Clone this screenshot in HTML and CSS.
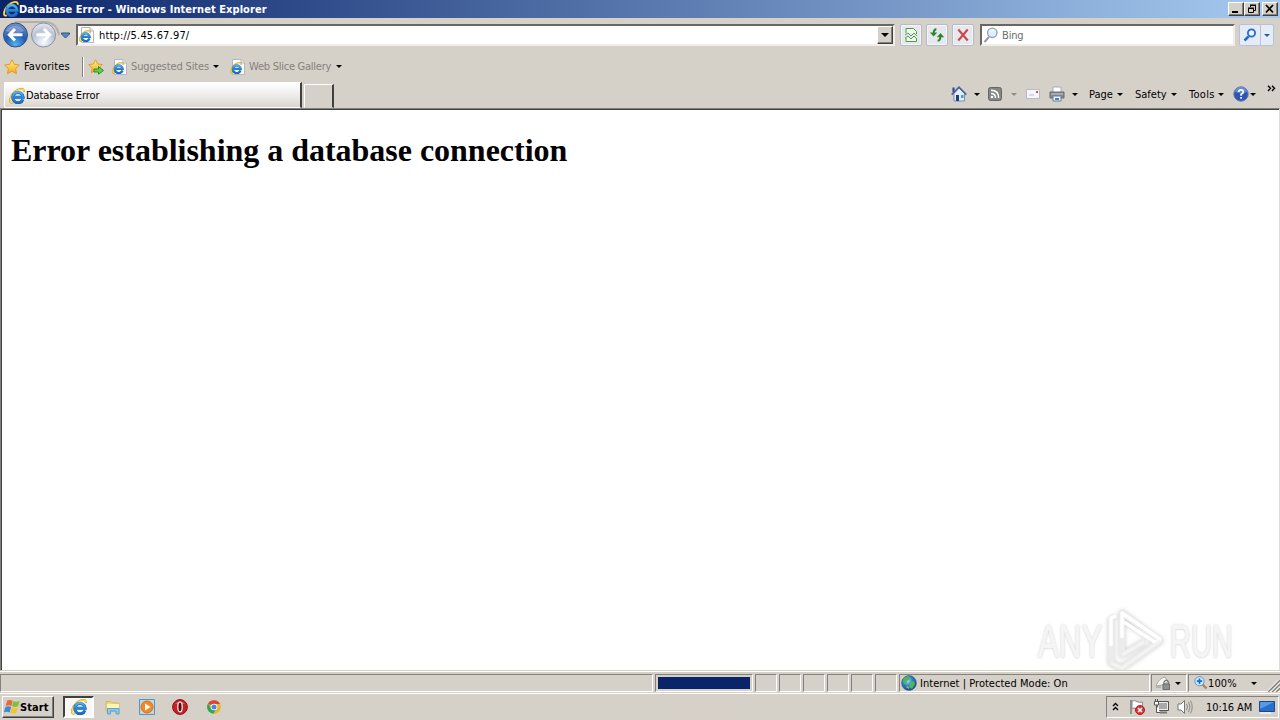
FILE: index.html
```html
<!DOCTYPE html>
<html lang="en">
<head>
<meta charset="utf-8">
<title>Database Error</title>
<link rel="stylesheet" href="styles.css">
</head>
<body>
<svg class="defs" aria-hidden="true">
  <defs>
    <linearGradient id="sky" gradientUnits="userSpaceOnUse" x1="0" y1="2" x2="0" y2="15"><stop offset="0" stop-color="#63c3f5"/><stop offset=".5" stop-color="#2f8fdd"/><stop offset="1" stop-color="#1a6cc6"/></linearGradient>
    <radialGradient id="blue" cx=".5" cy=".9" r=".9"><stop offset="0" stop-color="#52b4f2"/><stop offset=".5" stop-color="#235ab4"/><stop offset="1" stop-color="#7793ca"/></radialGradient>
    <radialGradient id="silver" cx=".5" cy=".8" r=".8"><stop offset="0" stop-color="#f7faff"/><stop offset=".6" stop-color="#b9c2d6"/><stop offset="1" stop-color="#e7eaf0"/></radialGradient>
    <linearGradient id="gold" x1="0" y1="0" x2="0" y2="1"><stop offset="0" stop-color="#fff38a"/><stop offset="1" stop-color="#f7a819"/></linearGradient>
    <radialGradient id="globe" cx=".4" cy=".35" r=".7"><stop offset="0" stop-color="#a8ddf4"/><stop offset=".5" stop-color="#2d7dc3"/><stop offset="1" stop-color="#17468c"/></radialGradient>
    <symbol id="ie" viewBox="0 0 16 16">
      <path d="M4 14.4C-.6 16.4-.2 9 5.4 4 10.5-.2 15.6-.2 14.8 4" fill="none" stroke="#dba21a" stroke-width="1.9"/>
      <path d="M3.5 14.4C-.2 15.4.4 9 5.6 4.1 10.4.4 14.8 0 14.6 3.2" fill="none" stroke="#ffe464" stroke-width="1.1"/>
      <path d="M13.9 11.4A5.2 5.2 0 1 1 14.2 9.3H5" fill="none" stroke="#1b5fb0" stroke-width="3"/>
      <path d="M13.7 11.4A5.2 5.2 0 1 1 14.1 9.3H5" fill="none" stroke="url(#sky)" stroke-width="2.2"/>
    </symbol>
    <symbol id="iepage" viewBox="0 0 16 16">
      <path d="M2.5.5H11L14.5 4V15.5H2.5Z" fill="#fdfdff" stroke="#aeb7c7"/><path d="M11 .5V4H14.5" fill="#dde5f0" stroke="#aeb7c7"/>
      <use href="#ie" x="0" y="3" width="12" height="12"/>
    </symbol>
    <symbol id="star" viewBox="0 0 16 16"><path d="M8 .8 10.2 5.3 15.3 6 11.6 9.6 12.5 14.7 8 12.2 3.5 14.7 4.4 9.6.7 6 5.8 5.3Z" fill="url(#gold)" stroke="#e09c2c"/></symbol>
    <symbol id="caret" viewBox="0 0 6 3"><path d="M0 0H6L3 3Z" fill="currentColor"/></symbol>
  </defs>
</svg>

<header class="titlebar">
  <svg class="i16"><use href="#ie"/></svg>
  <span class="title">Database Error - Windows Internet Explorer</span>
  <div class="winbtns">
    <span class="winbtn"><svg viewBox="0 0 14 12"><path d="M3 9H9" stroke="#000" stroke-width="2"/></svg></span>
    <span class="winbtn"><svg viewBox="0 0 14 12"><path d="M5.5 4V2.5H10.5V7.5H9M5 2H11M3.5 5.5H8.5V9.5H3.5ZM3 5H9" fill="none" stroke="#000"/></svg></span>
    <span class="winbtn close"><svg viewBox="0 0 14 12"><path d="M3 2 10 9.5M10 2 3 9.5" stroke="#000" stroke-width="1.7"/></svg></span>
  </div>
</header>

<nav class="nav">
  <svg class="travel" viewBox="0 0 72 28">
    <path d="M13 1H44Q55 2 57 14" fill="none" stroke="#b3b0ad" stroke-width="2"/>
    <circle cx="13.5" cy="14" r="12" fill="url(#blue)" stroke="#344c7c"/><path d="M4 10a10 9 0 0 1 18 0Q13 15 4 10Z" fill="#fff" opacity=".25"/>
    <path d="M13 8 7.3 13.8 13 19.5M8 13.8H20.5" fill="none" stroke="#fff" stroke-width="3"/>
    <circle cx="41.5" cy="14" r="12" fill="url(#silver)" stroke="#8a91a2"/>
    <path d="M42 8 47.7 13.8 42 19.5M47 13.8H34.5" fill="none" stroke="#fff" stroke-width="3"/>
    <path d="M59.5 12H67.5V13L63.5 17 59.5 13Z" fill="#4e8fc7" stroke="#284e80"/>
  </svg>
  <div class="address">
    <svg class="i16"><use href="#iepage"/></svg><span class="url">http://5.45.67.97/</span>
    <span class="drop"><svg class="caret wide"><use href="#caret"/></svg></span>
  </div>
  <div class="navbtns">
    <span class="navbtn"><svg class="i16" viewBox="0 0 16 16"><path d="M3 6V1.5H10.5L13.5 4.5V7M3 11V14.5H13.5V11" fill="#effaec" stroke="#4a9c48"/><path d="M2 8 5 6 8 9 11 6 14 9M2 11 5 9 8 12 11 9 14 12" fill="none" stroke="#4fa04d"/></svg></span>
    <span class="navbtn"><svg class="i16" viewBox="0 0 16 16"><path d="M7.4 2.3Q4.6 2.3 4.6 7" fill="none" stroke="#28812c" stroke-width="2"/><path d="M.9 5.4H8.3L4.6 9.6Z" fill="#288a2c"/><path d="M8.6 13.7Q11.5 13.7 11.5 9" fill="none" stroke="#28812c" stroke-width="2"/><path d="M7.8 10.2H15.2L11.5 6Z" fill="#288a2c"/></svg></span>
    <span class="navbtn"><svg class="i16" viewBox="0 0 16 16"><path d="M3.3 2.5 12.7 13.5M12.7 2.5 3.3 13.5" stroke="#c7494b" stroke-width="2.1"/></svg></span>
  </div>
  <div class="search">
    <svg class="i16" viewBox="0 0 16 16"><path d="M6 9.8 1.5 15" stroke="#9696a3" stroke-width="2"/><circle cx="9.3" cy="5.8" r="4.7" fill="#e2effa" stroke="#91a4be" stroke-width="1.4"/><path d="M7 5Q8 2.5 11 3.5" stroke="#fff" fill="none"/></svg>
    <span class="bing">Bing</span>
  </div>
  <div class="go">
    <span class="gomain"><svg class="go-icon" viewBox="0 0 14 14"><path d="M5.5 8.5 1.5 12.5" stroke="#2769cc" stroke-width="2.5"/><circle cx="8.5" cy="5" r="3.6" fill="#e8f3ff" stroke="#2769cc" stroke-width="1.8"/></svg></span>
    <span class="godrop"><svg class="caret"><use href="#caret"/></svg></span>
  </div>
</nav>

<div class="favbar">
  <svg class="i16"><use href="#star"/></svg><span class="favlabel">Favorites</span>
  <i class="divider"></i>
  <svg class="i16" viewBox="0 0 16 16"><use href="#star" width="15" height="15"/><path d="M6 10H10.5V7.5L15.5 11.5 10.5 15.2V13H6Z" fill="#67ce4b" stroke="#298d2c"/></svg>
  <svg class="i16 sug"><use href="#iepage"/></svg><span class="suggested">Suggested Sites</span><svg class="caret"><use href="#caret"/></svg>
  <svg class="i16 wsi"><use href="#iepage"/></svg><span class="slice">Web Slice Gallery</span><svg class="caret"><use href="#caret"/></svg>
</div>

<div class="tabbar">
  <div class="tab"><svg class="i16"><use href="#ie"/></svg><span class="tabname">Database Error</span></div>
  <div class="newtab"></div>
  <div class="commands">
    <svg class="i16" viewBox="0 0 16 16"><path d="M3 7.5V15H13.5V7.5L8 2Z" fill="#e6eef9" stroke="#758fb9"/><path d="M2.5 1.5V6" stroke="#353c88" stroke-width="2"/><path d="M.7 8.6 8 1.2 15.3 8.6" fill="none" stroke="#47639d" stroke-width="1.6"/><path d="M5 9H8V15H5Z" fill="#223d76"/><path d="M10 9H12.5V12H10Z" fill="#39a0de"/></svg>
    <svg class="caret c-home"><use href="#caret"/></svg>
    <svg class="rss" viewBox="0 0 14 14"><rect x=".5" y=".5" width="13" height="13" rx="2" fill="#858585" stroke="#676767"/><path d="M3 6.5Q7.5 6.5 7.5 11M3 3.3Q10.7 3.3 10.7 11" fill="none" stroke="#fff" stroke-width="1.5"/><circle cx="4" cy="10" r="1.3" fill="#fff"/></svg>
    <svg class="caret c-rss"><use href="#caret"/></svg>
    <svg class="mail" viewBox="0 0 14 10"><path d="M.5.5H13.5V9.5H.5Z" fill="#f7f7fb" stroke="#b9b8c4"/><path d="M10 2H12V4H10Z" fill="#d84957"/><path d="M3 6H8" stroke="#bbc"/></svg>
    <svg class="i16 printer" viewBox="0 0 16 16"><path d="M4 1H12V7H4Z" fill="#fff" stroke="#a5abb7"/><path d="M1 6H15V12H1Z" fill="#858a94" stroke="#666b73"/><path d="M2 8H14" stroke="#c7cbd2"/><path d="M4 10H12V15H4Z" fill="#eaf3fc" stroke="#6c7c94"/><path d="M6 13H10" stroke="#318ac9" stroke-width="2"/></svg>
    <svg class="caret c-print"><use href="#caret"/></svg>
    <span class="page">Page</span><svg class="caret"><use href="#caret"/></svg>
    <span class="safety">Safety</span><svg class="caret"><use href="#caret"/></svg>
    <span class="tools">Tools</span><svg class="caret"><use href="#caret"/></svg>
    <svg class="i16 help" viewBox="0 0 16 16"><circle cx="8" cy="8" r="7.2" fill="#2e55b0" stroke="#6178ac"/><path d="M2 6a6 5 0 0 1 12 0Q8 8 2 6" fill="#8aaef0" opacity=".6"/><path d="M5.7 6Q5.7 3.8 8 3.8T10.3 6Q10.3 7.2 8.1 8.3V9.7M8.1 11V12.8" fill="none" stroke="#fff" stroke-width="1.7"/></svg><svg class="caret c-help"><use href="#caret"/></svg>
    <svg class="more" viewBox="0 0 9 7"><path d="M1 .7 3.5 3.3 1 6M5 .7 7.5 3.3 5 6" fill="none" stroke="#000" stroke-width="1.4"/></svg>
  </div>
</div>

<main class="content">
  <h1>Error establishing a database connection</h1>
  <div class="watermark">
    <span class="any">ANY</span>
    <svg class="play" viewBox="0 0 60 66"><path d="M5 10V55L16 60 54 33 16 5V47L38 34" fill="none" stroke="#ebebeb" stroke-width="6" stroke-linejoin="round"/><path d="M5 38V10L10 8M16 30V5L54 31 50 35 18 14" fill="none" stroke="#fff" stroke-width="3.5" stroke-linejoin="round"/><path d="M5 55 16 60 54 33M16 47 38 34" fill="none" stroke="#f3f3f3" stroke-width="3"/></svg>
    <span class="run">RUN</span>
  </div>
</main>

<div class="status">
  <div class="pane message"></div>
  <div class="pane progress"><i></i></div>
  <div class="pane small"></div><div class="pane small"></div><div class="pane small"></div><div class="pane small"></div><div class="pane small"></div><div class="pane small"></div>
  <div class="pane zone"><svg class="i16" viewBox="0 0 16 16"><circle cx="8" cy="8" r="7.4" fill="url(#globe)" stroke="#315a79" stroke-width=".6"/><path d="M3 3 7 1 9 4 6 6 5 9 2 8ZM9 7 13 6 14 9 11 14 8 12Z" fill="#4fb659"/><path d="M5 12Q8 10 8 14" fill="#83d277"/></svg><span class="zonetext">Internet | Protected Mode: On</span></div>
  <div class="pane protect"><svg class="i16" viewBox="0 0 16 16"><path d="M1 11Q4 3 10 2L13 7 7 10Z" fill="#f4f4f4" stroke="#aaa"/><path d="M1 12H6" stroke="#999"/><path d="M9 9V7Q11.3 3.5 13.5 7V9" fill="none" stroke="#777" stroke-width="1.3"/><path d="M8 9H14.5V14.5H8Z" fill="#909090" stroke="#6c6c6c"/></svg><svg class="caret"><use href="#caret"/></svg></div>
  <div class="pane zoom"><svg class="zoomicon" viewBox="0 0 14 14"><path d="M8.5 8.5 12.5 12.5" stroke="#a9885f" stroke-width="2.4"/><circle cx="5.5" cy="5.2" r="4.6" fill="#d3eaff" stroke="#5d93ce"/><path d="M5.5 2.5V8M2.8 5.2H8.2" stroke="#176cce" stroke-width="1.8"/></svg><span class="percent">100%</span><svg class="caret c-zoom"><use href="#caret"/></svg>
    <svg class="grip" viewBox="0 0 12 12"><path d="M0 12 12 0M4 12 12 4M8 12 12 8" stroke="#85817b" stroke-width="1.6"/><path d="M-1.5 12 12-1.5M2.5 12 12 2.5M6.5 12 12 6.5" stroke="#fff"/></svg></div>
</div>

<footer class="taskbar">
  <div class="start"><svg class="flag" viewBox="0 0 16 16"><path d="M3.2 1.6Q5.8.2 8.6 1.7L7.4 7Q4.8 5.6 1.7 7Z" fill="#ed6732"/><path d="M9.4 2Q12.2 3.4 15.6 1.8L14.1 7.3Q11.2 8.8 8 7.3Z" fill="#85be38"/><path d="M1.4 8Q4.3 6.6 7.1 8L5.7 13.4Q3 12-.1 13.4Z" fill="#3b8ad7"/><path d="M7.8 8.3Q10.8 9.8 13.8 8.4L12.3 13.8Q9.5 15.2 6.4 13.8Z" fill="#f6c52c"/></svg><span class="startlabel">Start</span></div>
  <div class="ietask"><svg class="i16"><use href="#ie"/></svg></div>
  <svg class="i16 folder" viewBox="0 0 16 16"><path d="M1 2.5H6L7.5 4H14V12H1Z" fill="#f1d67f" stroke="#d6b766"/><path d="M2 5H14V9H2Z" fill="#fff4b4"/><path d="M2.5 15V9.5H14V15H11V12H5.5V15Z" fill="#8bc8ea" stroke="#5aa4cf"/></svg>
  <svg class="i16 media" viewBox="0 0 16 16"><path d="M.5.5H15.5V15.5H.5Z" fill="#b9d9ee" stroke="#5a93bd"/><circle cx="8" cy="8" r="6" fill="#f28a20" stroke="#d97112"/><path d="M6 4.5 11.5 8 6 11.5Z" fill="#fff"/></svg>
  <svg class="i16 opera" viewBox="0 0 16 16"><circle cx="8" cy="8" r="7.4" fill="#c52129" stroke="#8e1016"/><path d="M3 5a5.5 4 0 0 1 10 0" fill="#f49a9a" opacity=".5"/><ellipse cx="8" cy="8" rx="2.2" ry="5" fill="#5e090d" stroke="#fff" stroke-width="1.2"/></svg>
  <svg class="chrome" viewBox="0 0 14 14"><circle cx="7" cy="7" r="6.8" fill="#e4b829"/><path d="M7 7 1 3.4A7 7 0 0 1 13.1 4H7Z" fill="#db4437"/><path d="M1 3.4A7 7 0 0 0 6.3 13.8L9 9 4 8Z" fill="#2da65a"/><circle cx="7" cy="7" r="3.3" fill="#fff"/><circle cx="7" cy="7" r="2.5" fill="#4285f4"/></svg>
  <div class="tray">
    <svg class="chev" viewBox="0 0 7 9"><path d="M1 4 3.5 1.5 6 4M1 8 3.5 5.5 6 8" fill="none" stroke="#000" stroke-width="1.3"/></svg>
    <svg class="i16 actionflag" viewBox="0 0 16 16"><path d="M2 1V15" stroke="#777" stroke-width="1.4"/><path d="M3 2Q6 1 8 2.5T13.5 3V10Q9 11 7 9.5T3 10Z" fill="#fff" stroke="#898989"/><circle cx="11" cy="11" r="4.5" fill="#d93636" stroke="#a81e22"/><path d="M9 9 13 13M13 9 9 13" stroke="#fff" stroke-width="1.5"/></svg>
    <svg class="i16 network" viewBox="0 0 16 16"><path d="M4.5 2.5H15.5V11.5H4.5Z" fill="#aaa9a7" stroke="#555"/><path d="M5.5 3.5H14.5V10.5H5.5Z" fill="none" stroke="#eee"/><path d="M7 13.5H14" stroke="#777" stroke-width="2"/><path d="M1.5 2.5V6H5.5V2.5ZM3.5 6V13.5H7M2.5 0V3M4.5 0V3" fill="#fff" stroke="#555"/></svg>
    <svg class="i16 volume" viewBox="0 0 16 16"><path d="M1 5H4L7.5 1.5V14.5L4 11H1Z" fill="#fff" stroke="#777"/><path d="M9.5 5Q11.5 8 9.5 11M11.5 3Q14.5 8 11.5 13M13.4 1.5Q17 8 13.4 14.5" fill="none" stroke="#8b8b8b"/></svg>
    <span class="clock">10:16 AM</span>
    <svg class="desktop" viewBox="0 0 16 14"><path d="M.5 1.5H15.5V11.5H.5Z" fill="#276fcb" stroke="#1c4788"/><path d="M1 2H15L1 9Z" fill="#589be4"/><path d="M1 13H12" stroke="#eff5ff" stroke-width="1.5"/></svg>
  </div>
</footer>
</body>
</html>
```
FILE: styles.css
```css
* { box-sizing: border-box; }
body { margin: 0; width: 1280px; height: 720px; overflow: hidden; display: flex; flex-direction: column; background: #d5d0c8; color: #000; font: 11px/14px "DejaVu Sans Condensed", "DejaVu Sans", sans-serif; white-space: nowrap; }
svg, span, i { flex: none; display: block; }
.defs { width: 0; height: 0; position: absolute; }
.i16 { width: 16px; height: 16px; }
.caret { width: 6px; height: 3px; }
.caret.wide { width: 8px; height: 4px; }
.titlebar { height: 18px; flex: none; display: flex; align-items: center; padding-left: 3px; background: linear-gradient(90deg, #0a246a, #a6caf0); }
.title { color: #fff; font-weight: bold; letter-spacing: .065px; width: 350px; padding-top: 1px; }
.winbtns { display: flex; margin-left: auto; padding-right: 2px; }
.winbtn { width: 16px; height: 14px; background: #d5d0c8; border: 1px solid; border-color: #fff #404040 #404040 #fff; box-shadow: inset -1px -1px #808080; }
.winbtn svg { width: 14px; height: 12px; }
.close { margin-left: 2px; }
.nav { height: 34px; flex: none; display: flex; align-items: center; padding-left: 2px; }
.travel { width: 72px; height: 28px; }
.address { margin-left: 2px; width: 819px; height: 22px; background: #fff; border: 2px solid; border-color: #696763 #f1eeea #f1eeea #696763; display: flex; align-items: center; padding-left: 1px; }
.url { margin-left: 4px; width: 130px; padding-top: 2px; letter-spacing: .18px; }
.drop { width: 16px; height: 18px; margin-left: auto; background: #d5d0c8; border: 1px solid; border-color: #fff #404040 #404040 #fff; box-shadow: inset -1px -1px #808080; display: flex; align-items: center; justify-content: center; }
.navbtns { display: flex; gap: 4px; margin-left: 5px; }
.navbtn { width: 22px; height: 22px; border: 1px solid #b5bcc7; border-radius: 2px; background: #e6e8ed; display: flex; align-items: center; justify-content: center; box-shadow: inset 0 0 0 1px #f4f5f7; }
.search { margin-left: 6px; width: 255px; height: 22px; border: 2px solid; border-color: #696763 #f1eeea #f1eeea #696763; background: #fff; display: flex; align-items: center; padding-left: 1px; }
.bing { margin-left: 3px; padding-top: 2px; color: #6d6d6d; letter-spacing: -.15px; }
.go { margin-left: 4px; width: 35px; height: 22px; display: flex; border: 1px solid #b7c2d5; border-radius: 2px; background: #e5ecf7; color: #265eab; }
.gomain { width: 21px; display: flex; align-items: center; justify-content: center; border-right: 1px solid #b7c2d5; }
.godrop { width: 12px; display: flex; align-items: center; justify-content: center; }
.go-icon { width: 14px; height: 14px; }
.favbar { height: 28px; flex: none; display: flex; align-items: center; padding: 1px 0 0 4px; }
.favlabel { margin-left: 4px; width: 58px; letter-spacing: .12px; padding-top: 1px; }
.divider { width: 2px; height: 20px; border-left: 1px solid #85817b; border-right: 1px solid #fff; margin-right: 4px; }
.sug { margin-left: 8px; }
.suggested { color: #85817b; margin-left: 3px; width: 82px; padding-top: 1px; letter-spacing: -.12px; }
.wsi { margin-left: 11px; }
.slice { color: #85817b; margin-left: 3px; width: 87px; padding-top: 1px; letter-spacing: -.25px; }
.tabbar { height: 28px; flex: none; display: flex; align-items: flex-end; padding-left: 4px; }
.tab { width: 298px; height: 26px; display: flex; align-items: center; padding: 2px 0 0 4px; background: linear-gradient(#fff, #ebe9e6 60%, #dad6d0); border: 1px solid; border-color: #fff #404040 transparent #fff; border-right-width: 2px; }
.tabname { margin-left: 1px; letter-spacing: -.07px; }
.newtab { width: 30px; height: 24px; margin-left: 2px; border: 1px solid; border-color: #fff #404040 transparent #fff; border-right-width: 2px; }
.commands { margin-left: 617px; width: 329px; height: 28px; display: flex; align-items: center; }
.c-home { margin-left: 7px; }
.rss { width: 14px; height: 14px; margin-left: 8px; }
.c-rss { margin-left: 9px; color: #918d86; }
.mail { width: 14px; height: 10px; margin-left: 9px; }
.printer { margin-left: 9px; }
.c-print { margin-left: 7px; }
.page, .safety, .tools { padding-top: 1px; }
.page { margin-left: 11px; width: 28px; }
.safety { margin-left: 12px; width: 36px; }
.tools { margin-left: 12px; width: 29px; letter-spacing: .3px; }
.help { margin-left: 9px; }
.c-help { margin-left: 1px; }
.more { width: 9px; height: 7px; margin: 0 0 12px 11px; }
.content { height: 563px; flex: none; position: relative; background: #fff; border: 1px solid; border-color: #85817b #dedbd5 #d5d0c8 #85817b; box-shadow: inset 1px 1px #404040; overflow: hidden; }
h1 { margin: 23px 0 0 10px; font: bold 32px/36px "Liberation Serif", "Times New Roman", serif; letter-spacing: -.02px; }
.watermark { position: absolute; left: 1037px; top: 499px; width: 210px; height: 66px; display: flex; align-items: center; color: #f5f5f5; font: 46px/50px "Liberation Sans", sans-serif; text-shadow: 0 0 3px #c8c8c8, 0 1px 2px #ddd; -webkit-text-stroke: 1px #f5f5f5; }
.any { width: 68px; transform: scaleX(.68); transform-origin: left; }
.play { width: 60px; height: 66px; filter: drop-shadow(0 0 2px #ccc); }
.run { width: 70px; margin-left: 4px; transform: scaleX(.63); transform-origin: left; }
.status { height: 22px; flex: none; display: flex; align-items: flex-end; border-top: 1px solid #fff; padding-bottom: 1px; }
.pane { flex: none; height: 18px; border: 1px solid; border-color: #85817b #fff #fff #85817b; display: flex; align-items: center; margin-right: 2px; }
.message { width: 653px; }
.progress { width: 98px; padding-left: 2px; }
.progress i { width: 92px; height: 12px; background: #0a246a; }
.small { width: 22px; }
.zone { width: 251px; padding-left: 1px; }
.zonetext { margin-left: 3px; padding-top: 1px; letter-spacing: .03px; }
.protect { width: 36px; padding-left: 3px; margin-right: 1px; margin-left: -1px; }
.protect .caret { margin-left: 4px; }
.zoom { width: 92px; margin: 0; padding-left: 5px; border-right: 0; }
.zoomicon { width: 14px; height: 14px; }
.percent { width: 41px; margin-left: 0; padding-top: 1px; letter-spacing: .1px; }
.c-zoom { margin-left: 2px; }
.grip { width: 12px; height: 12px; margin: 5px 0 0 auto; }
.taskbar { height: 27px; flex: none; display: flex; align-items: center; border-top: 1px solid #fff; padding: 0 1px 0 2px; }
.start { width: 52px; height: 22px; display: flex; align-items: center; padding-left: 1px; border: 1px solid; border-color: #fff #404040 #404040 #fff; box-shadow: inset -1px -1px #808080; }
.flag { width: 16px; height: 16px; }
.startlabel { font-weight: bold; font-size: 11px; letter-spacing: .1px; padding-top: 1px; }
.ietask { width: 31px; height: 22px; margin-left: 9px; border: 2px solid; border-color: #404040 #fff #fff #404040; background: #f8f7f6; display: flex; align-items: center; justify-content: center; }
.folder { margin-left: 11px; }
.media { margin-left: 18px; }
.opera { margin-left: 17px; }
.chrome { width: 14px; height: 14px; margin-left: 19px; }
.tray { margin-left: auto; width: 173px; height: 22px; display: flex; align-items: center; padding-left: 5px; border: 1px solid; border-color: #85817b #fff #fff #85817b; }
.chev { width: 7px; height: 9px; margin-bottom: 2px; }
.actionflag { margin-left: 10px; }
.network { margin-left: 8px; }
.volume { margin-left: 8px; }
.clock { margin-left: 13px; width: 51px; letter-spacing: -.1px; padding-top: 1px; }
.desktop { width: 16px; height: 14px; margin-left: 2px; }
```
